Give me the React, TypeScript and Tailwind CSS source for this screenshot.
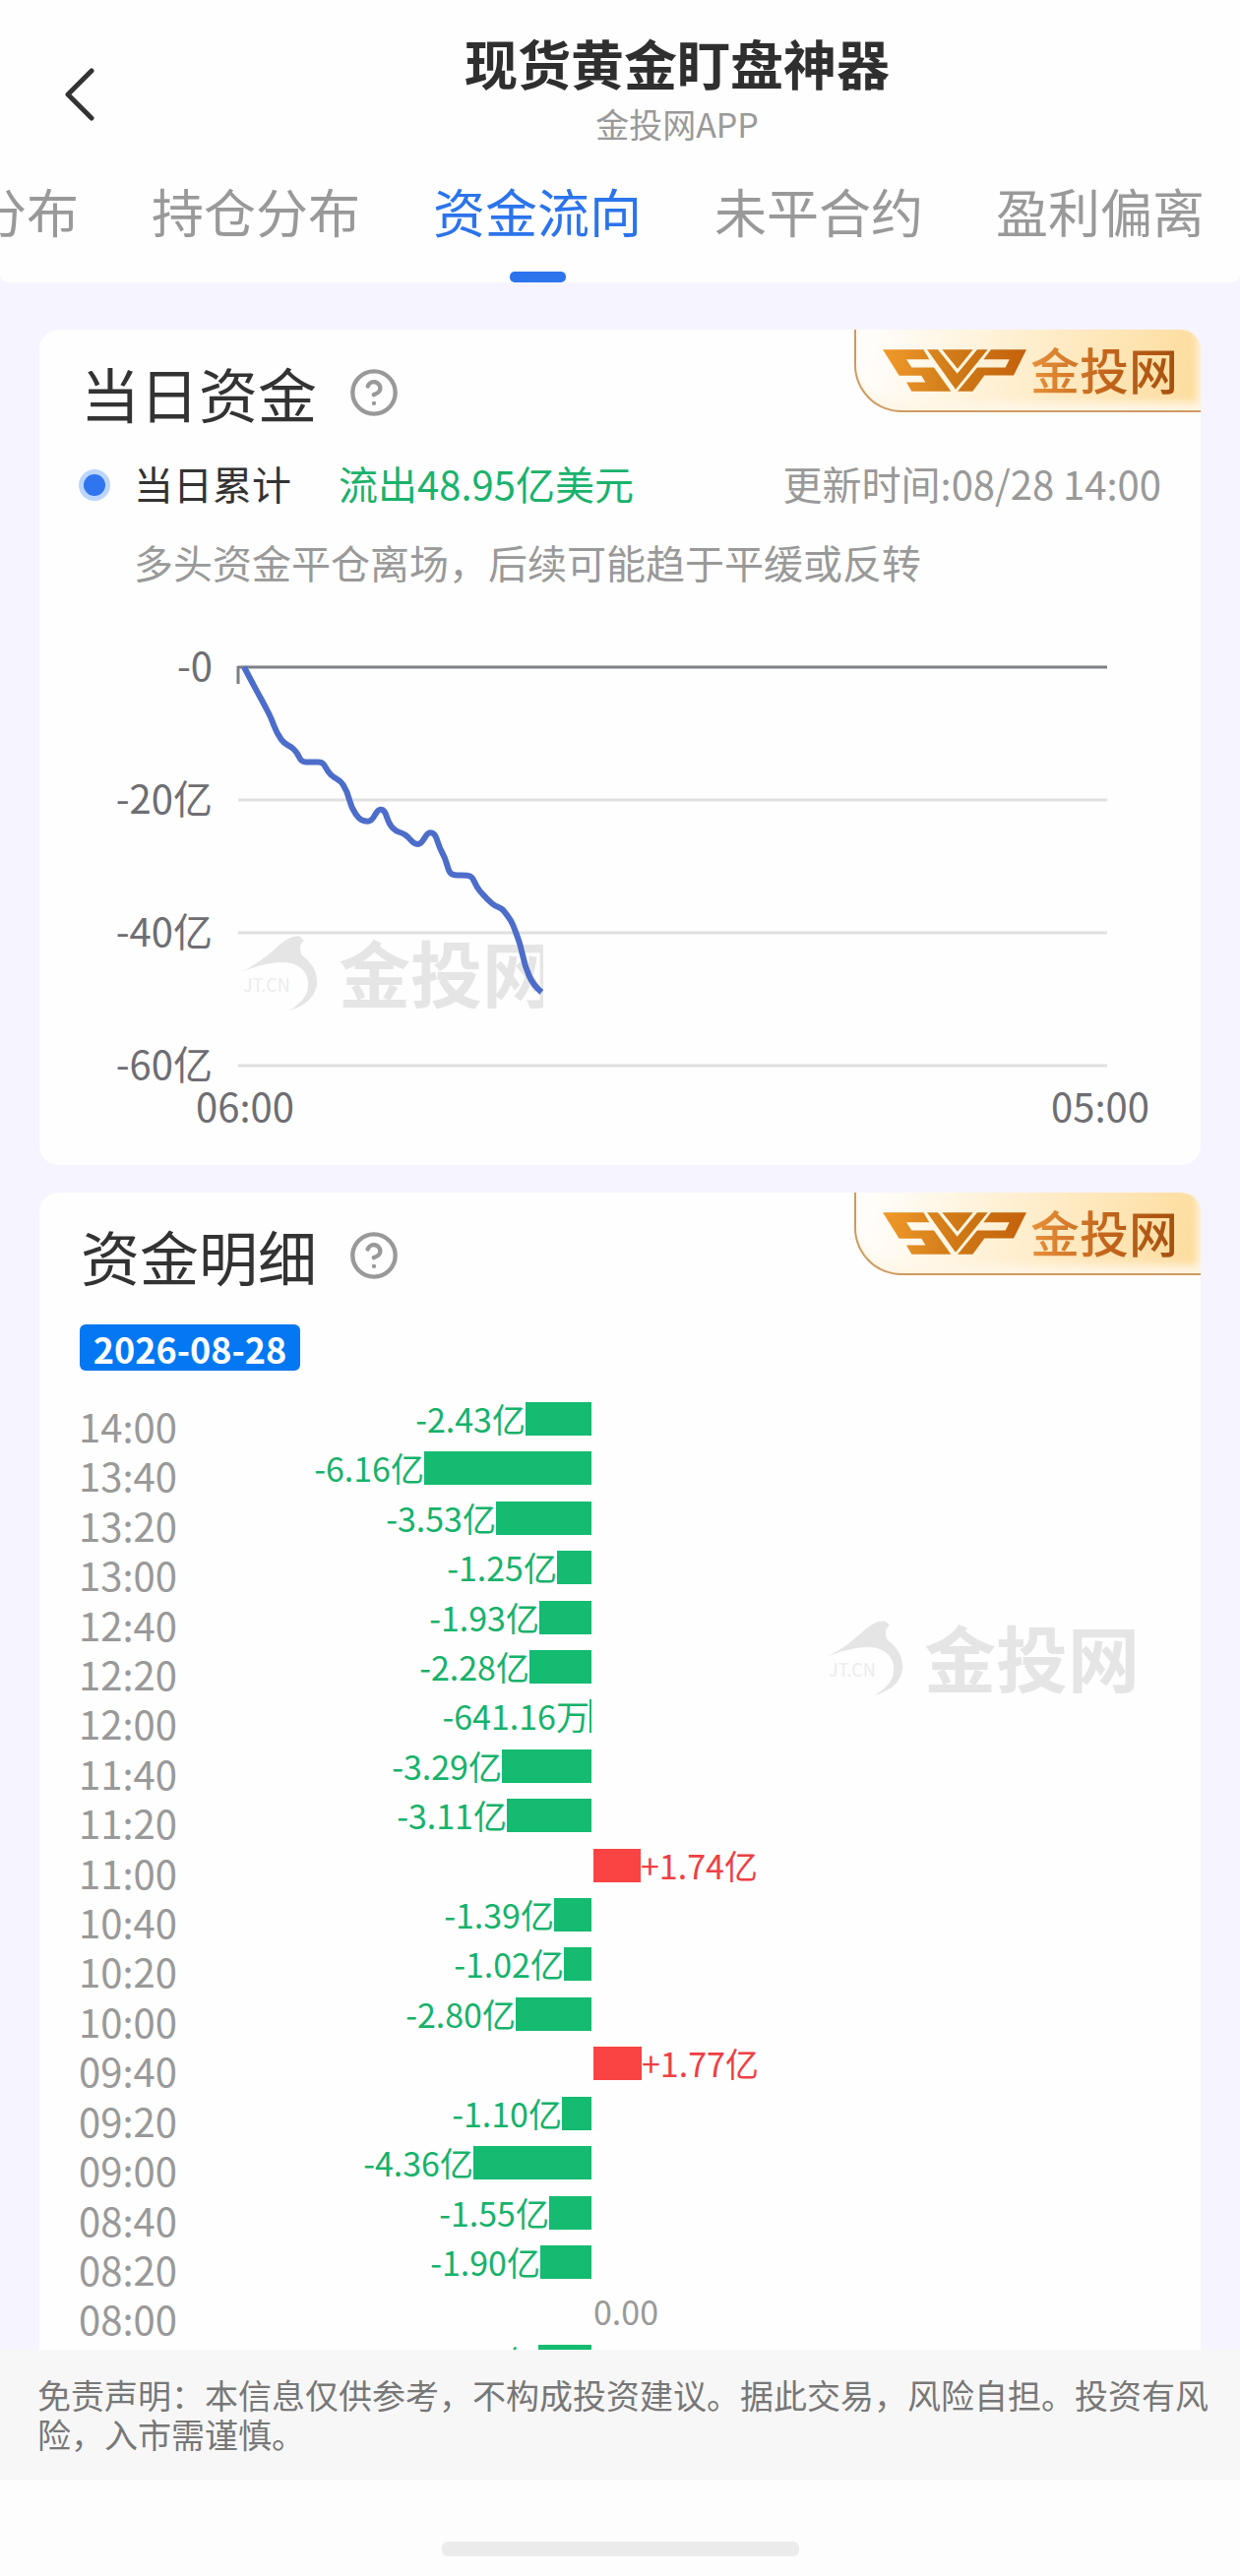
import { CircleHelp } from 'lucide-react';

const tabs = ['成交分布', '持仓分布', '资金流向', '未平合约', '盈利偏离'];

// cumulative flow since 06:00, one point every 20 minutes (亿)
const flow = [
  0, -3.5, -7, -10.9, -12.35, -14.3, -14.3, -16.2, -17.75, -22.11, -23.21, -21.44, -24.24,
  -25.26, -26.65, -24.91, -28.02, -31.31, -31.37, -33.65, -35.58, -36.83, -40.36, -46.52, -48.95,
];

const details = [
  { time: '14:00', value: -2.43, label: '-2.43亿' },
  { time: '13:40', value: -6.16, label: '-6.16亿' },
  { time: '13:20', value: -3.53, label: '-3.53亿' },
  { time: '13:00', value: -1.25, label: '-1.25亿' },
  { time: '12:40', value: -1.93, label: '-1.93亿' },
  { time: '12:20', value: -2.28, label: '-2.28亿' },
  { time: '12:00', value: -0.06, label: '-641.16万' },
  { time: '11:40', value: -3.29, label: '-3.29亿' },
  { time: '11:20', value: -3.11, label: '-3.11亿' },
  { time: '11:00', value: 1.74, label: '+1.74亿' },
  { time: '10:40', value: -1.39, label: '-1.39亿' },
  { time: '10:20', value: -1.02, label: '-1.02亿' },
  { time: '10:00', value: -2.8, label: '-2.80亿' },
  { time: '09:40', value: 1.77, label: '+1.77亿' },
  { time: '09:20', value: -1.1, label: '-1.10亿' },
  { time: '09:00', value: -4.36, label: '-4.36亿' },
  { time: '08:40', value: -1.55, label: '-1.55亿' },
  { time: '08:20', value: -1.9, label: '-1.90亿' },
  { time: '08:00', value: 0, label: '0.00' },
  { time: '07:40', value: -1.95, label: '-1.95亿' },
];

const AXIS_TOP = 85;
const STEP = 135; // px per 20亿

const clamp = (v: number, a: number, b: number) => Math.max(Math.min(a, b), Math.min(Math.max(a, b), v));

// smooth line whose control points never overshoot the neighbouring points
const smoothPath = (pts: number[][], smooth = 0.5) => {
  let d = `M${pts[0][0]} ${pts[0][1]}`;
  let cp = pts[0];
  for (let i = 1; i < pts.length; i++) {
    const [x, y] = pts[i];
    const prev = pts[i - 1];
    const next = pts[i + 1];
    let c1 = [x, y];
    let nextCp = [x, y];
    if (next) {
      const lenPrev = Math.hypot(x - prev[0], y - prev[1]);
      const lenNext = Math.hypot(next[0] - x, next[1] - y);
      const ratio = lenNext / (lenNext + lenPrev);
      nextCp = [0, 1].map(k => clamp(pts[i][k] + (next[k] - prev[k]) * smooth * ratio, pts[i][k], next[k]));
      c1 = [0, 1].map(k => clamp(pts[i][k] - ((nextCp[k] - pts[i][k]) * lenPrev) / lenNext, pts[i][k], prev[k]));
      nextCp = [0, 1].map(k => pts[i][k] + ((pts[i][k] - c1[k]) * lenNext) / lenPrev);
    }
    d += ` C${cp[0]} ${cp[1]} ${c1[0]} ${c1[1]} ${x} ${y}`;
    cp = nextCp;
  }
  return d;
};

const linePath = smoothPath(flow.map((v, i) => [208 + i * 12.6, AXIS_TOP - (v / 20) * STEP]));

function WatermarkMark() {
  return (
    <>
      <path
        fill="#e5e5e5"
        d="M0 37 C14 31 26 22 38 11 C46 4 54 -1 61 1 L65 5 C60 8 60 14 63 20 C74 28 79 38 78 50 C76 62 67 71 50 76 C61 69 69 61 69 51 C70 39 63 31 52 28 C38 25 22 29 0 37 Z"
      />
      <text x="3" y="57" fontSize="18" fill="#ececec">JT.CN</text>
      <text x="100" y="67" fontSize="73" fontWeight="700" fill="#e5e5e5">金投网</text>
    </>
  );
}

function VipBadge() {
  return (
    <div className="absolute top-0 right-0 w-[352px] h-[84px] pl-[27px] flex items-center gap-1 rounded-bl-[48px] rounded-tr-[20px] border-l-2 border-b-2 border-[#cf9a60] bg-[linear-gradient(100deg,#fffdfa_5%,#fff1d6_40%,#fddc9c)] shadow-[inset_-3px_-8px_8px_#fff6e6]">
      <svg viewBox="10 18 438 128" className="w-[146px] h-[43px]" aria-label="SVP">
        <defs>
          <linearGradient id="svp" x1="10" y1="0" x2="448" y2="0" gradientUnits="userSpaceOnUse">
            <stop offset="0" stopColor="#f09a2b" />
            <stop offset="0.5" stopColor="#cf7a17" />
            <stop offset="1" stopColor="#c4610c" />
          </linearGradient>
        </defs>
        <g fill="url(#svp)">
          <path d="M10 18 H134 L152 48 H82 L98 73 H166 L218 146 H98 L82 118 H140 L128 98 H60 Z" />
          <path d="M145 18 H178 L237 92 L298 18 H330 L232 140 Z" />
          <path d="M191 18 H285 L238 77 Z" />
          <path d="M340 18 H448 L409 97 H320 L284 146 H238 L298 73 H384 L396 48 H317 Z" />
        </g>
      </svg>
      <span className="-mt-1 text-[50px] leading-[60px] font-medium text-transparent bg-clip-text bg-[linear-gradient(90deg,#e8913a,#c4661c_50%,#a4500f)]">金投网</span>
    </div>
  );
}

function CardTitle({ title }: { title: string }) {
  return (
    <div className="flex items-center gap-8 pl-0.5">
      <h2 className="text-[60px] leading-[60px] text-[#333]">{title}</h2>
      <button aria-label={title + '说明'}>
        <CircleHelp className="w-[52px] h-[52px] text-[#999]" strokeWidth={2} />
      </button>
    </div>
  );
}

function FlowChart() {
  return (
    <svg viewBox="0 0 1180 591" className="block w-full mt-0.5" fontSize="40" fill="#6e6e73">
      <svg x="204" y="358" width="308" height="84">
        <WatermarkMark />
      </svg>
      {['-0', '-20亿', '-40亿', '-60亿'].map((label, i) => (
        <g key={label}>
          <text x="176" y={AXIS_TOP + i * STEP + 14} textAnchor="end">{label}</text>
          <line x1="202" x2="1085" y1={AXIS_TOP + i * STEP} y2={AXIS_TOP + i * STEP} stroke={i ? '#e0e0e2' : '#7c7f84'} strokeWidth="3" />
        </g>
      ))}
      <line x1="202" x2="202" y1="84" y2="102" stroke="#7c7f84" strokeWidth="3" />
      <path d={linePath} fill="none" stroke="#4d6dca" strokeWidth="6" strokeLinejoin="round" />
      <text x="209" y="547" textAnchor="middle">06:00</text>
      <text x="1078" y="547" textAnchor="middle">05:00</text>
    </svg>
  );
}

function DetailRow({ value, label }: { value: number; label: string }) {
  const width = Math.max(1, Math.round(Math.abs(value) * 27.6));
  return (
    <li className="flex-1 grid grid-cols-2 gap-0.5 text-[34px] leading-[34px]">
      {value < 0 ? (
        <div className="flex justify-end text-[#16b26b]">
          <span>{label}</span>
          <span className="h-[34px] bg-[#14bb71]" style={{ width }} />
        </div>
      ) : (
        <div className={value > 0 ? 'col-start-2 flex text-[#ee3f45]' : 'col-start-2 flex text-[#999]'}>
          {value > 0 && <span className="h-[34px] bg-[#fa4343]" style={{ width }} />}
          <span>{label}</span>
        </div>
      )}
    </li>
  );
}

export default function App() {
  return (
    <div lang="zh-CN" className="h-screen flex flex-col overflow-hidden bg-[#f5f4ff] font-['Noto_Sans_CJK_SC',sans-serif]">
      <header className="shrink-0 bg-[#fefefe] rounded-b-lg pt-[34px]">
        <div className="flex">
          <button aria-label="返回" className="w-[116px] pl-[64px] pt-[35px] flex items-start">
            <svg viewBox="0 0 32 54" className="w-[32px] h-[54px]" fill="none" stroke="#333" strokeWidth="5">
              <path d="M29 3 L5 27 L29 51" strokeLinecap="round" strokeLinejoin="round" />
            </svg>
          </button>
          <div className="flex-1 text-center">
            <h1 className="text-[54px] leading-[60px] font-bold text-[#2f2f2f]">现货黄金盯盘神器</h1>
            <p className="mt-3 text-[34px] leading-[40px] text-[#999]">金投网APP</p>
          </div>
        </div>
        <nav className="mt-[38px] overflow-hidden">
          <div className="flex gap-[74px] -ml-[132px]">
            {tabs.map(tab => (
              <button key={tab} className={tab === '资金流向' ? 'shrink-0 flex flex-col items-center text-[#2b74ec]' : 'shrink-0 flex flex-col items-center text-[#999]'}>
                <span className="text-[53px] leading-[60px]">{tab}</span>
                {tab === '资金流向' && <span className="mt-8 w-[57px] h-[11px] rounded-[5px] bg-[#2b74ec]" />}
              </button>
            ))}
          </div>
        </nav>
      </header>

      <main className="flex-1 min-h-0 overflow-hidden px-10 pt-12">
        <section className="relative bg-[#fefefe] rounded-[20px] pt-[34px]">
          <VipBadge />
          <div className="px-10">
            <CardTitle title="当日资金" />
            <div className="mt-[42px] flex items-center text-[40px] leading-[40px]">
              <span className="mt-1 w-8 h-8 rounded-full bg-[#bcd5fb] flex items-center justify-center">
                <span className="w-[22px] h-[22px] rounded-full bg-[#2f75f0]" />
              </span>
              <span className="ml-6 text-[#333]">当日累计</span>
              <span className="ml-12 text-[#1ab26c]">流出48.95亿美元</span>
              <span className="ml-auto text-[#999]">更新时间:08/28 14:00</span>
            </div>
            <p className="mt-10 ml-14 text-[40px] leading-[40px] text-[#999]">多头资金平仓离场，后续可能趋于平缓或反转</p>
          </div>
          <FlowChart />
        </section>

        <section className="relative mt-7 bg-[#fefefe] rounded-[20px] pt-[34px] pl-10">
          <VipBadge />
          <CardTitle title="资金明细" />
          <time className="mt-10 ml-px w-[224px] h-[47px] flex items-center justify-center rounded-md bg-[#0478f2] text-[36px] leading-[40px] font-bold text-white">2026-08-28</time>
          <div className="relative mt-8 flex h-[1008px]">
            <ul className="w-[101px] pt-1 -mb-1 flex flex-col text-[40px] leading-[40px] text-[#999]">
              {details.map(d => (
                <li key={d.time} className="flex-1">{d.time}</li>
              ))}
            </ul>
            <ul className="flex-1 pr-[197px] flex flex-col">
              {details.map(d => (
                <DetailRow key={d.time} value={d.value} label={d.label} />
              ))}
            </ul>
            <svg viewBox="0 0 322 84" className="absolute right-[59px] top-[222px] w-[322px] h-[84px]">
              <WatermarkMark />
            </svg>
          </div>
        </section>
      </main>

      <footer className="shrink-0 bg-[#fdfdfd]">
        <p className="bg-[#f7f7f7] pl-[38px] pr-7 pt-[26px] pb-[26px] text-[34px] leading-[40px] text-[#777]">
          免责声明：本信息仅供参考，不构成投资建议。据此交易，风险自担。投资有风险，入市需谨慎。
        </p>
        <div className="h-[98px] flex justify-center pt-[63px]">
          <div className="w-[363px] h-[15px] rounded-md bg-[#ebebeb]" />
        </div>
      </footer>
    </div>
  );
}
